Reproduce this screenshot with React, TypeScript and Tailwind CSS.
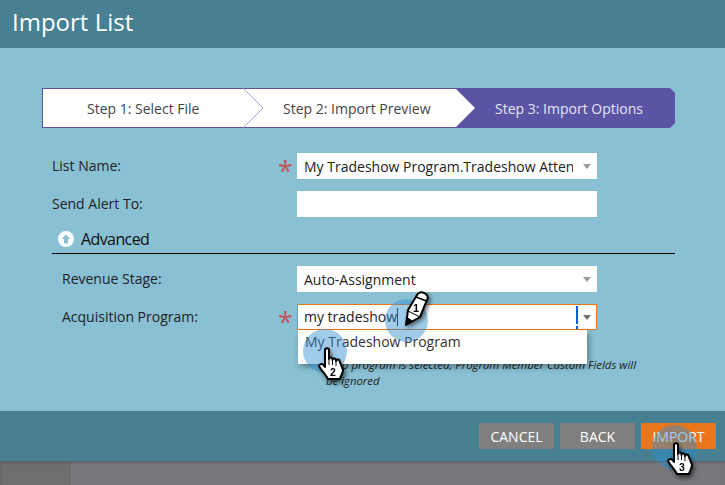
const font = { fontFamily: '"Open Sans", sans-serif' };

function Hand({ n, className }: { n: string; className: string }) {
  return (
    <svg viewBox="0 0 28 34" className={`absolute w-[28px] h-[34px] drop-shadow-[2px_3px_2px_rgba(0,0,0,0.55)] ${className}`}>
      <path
        d="M7 3c0-2.500 4-2.500 4 0v9c0-2 3.500-2 3.500 0v1c0-2 3.500-2 3.500 0v1c0-2 3.500-2 3.500 0l3.500 9c0 3-2 5-3 9H10C8 28 4 24 1.500 20c-1.200-2 1.500-4 3.500-2.500L7 20z"
        fill="#fff"
        stroke="#000"
        strokeWidth="2"
        strokeLinejoin="round"
      />
      <path d="M11 12v6M14.500 13v5M18 14v5" stroke="#000" strokeWidth="1" />
      <text x="15" y="29" textAnchor="middle" fontSize="10.500" fontWeight="600" fontFamily="Liberation Sans, sans-serif" fill="#000">
        {n}
      </text>
    </svg>
  );
}

function Caret({ dark }: { dark?: boolean }) {
  return (
    <span className={`w-0 h-0 border-x-[4px] border-x-transparent border-t-[5px] ${dark ? 'border-t-[#6f6f6f]' : 'border-t-[#9a9a9a]'}`} />
  );
}

function Star() {
  return <span className="block -ml-[5px] text-[27px] leading-[26px] h-[26px] pt-[5px] text-[#c4545c] text-center">*</span>;
}

function Select({ value, clip }: { value: string; clip?: boolean }) {
  return (
    <div className="w-[300px] h-[26px] bg-white flex items-center pl-[7px] pr-[6px] text-[14px] text-[#222]">
      <span className={`whitespace-nowrap overflow-hidden ${clip ? 'w-[269px] shrink-0' : 'flex-1'}`}>{value}</span>
      <span className="ml-auto flex">
        <Caret />
      </span>
    </div>
  );
}

function Row({ label, indent, star, children, className }: { label: string; indent?: boolean; star?: boolean; children: React.ReactNode; className: string }) {
  return (
    <div className={`flex items-center ${className}`}>
      <label className={`text-[14px] text-[#222] w-[227px] pb-[2px] ${indent ? 'pl-[10px]' : ''}`}>{label}</label>
      <div className="w-[18px] flex justify-center">{star && <Star />}</div>
      {children}
    </div>
  );
}

function Button({ label, orange }: { label: string; orange?: boolean }) {
  return (
    <button className={`w-[75px] h-[26px] text-[14px] text-white ${orange ? 'bg-[#e9761a]' : 'bg-[#7f7f7f]'}`}>
      {label}
    </button>
  );
}

export default function App() {
  return (
    <div className="w-[725px] h-[485px] overflow-hidden flex flex-col relative bg-[#78777c]" style={font}>
      {/* header */}
      <div className="h-[48px] bg-[#478092] flex items-center pl-[12px] pb-[5px] shrink-0">
        <h1 className="text-[24px] text-white">Import List</h1>
      </div>

      {/* body */}
      <div className="h-[363px] bg-[#89c0d3] shrink-0 pt-[40px] pl-[42px]">
        {/* stepper */}
        <div className="flex w-[633px] h-[40px] text-[14px]">
          <div className="relative w-[201px] bg-white border-y border-l border-[#5a54a4] pl-[44px] flex items-center text-[#444]">
            Step 1: Select File
            <svg viewBox="0 0 21 40" className="absolute z-10 left-[200px] top-[-1px] w-[21px] h-[40px]">
              <path d="M0 .5h.5L20 20 .5 39.500H0z" fill="#fff" />
              <path d="M.5 .5 20 20 .5 39.500" fill="none" stroke="#a9a4d3" strokeWidth="1" />
            </svg>
          </div>
          <div className="relative w-[213px] bg-white border-y border-[#5a54a4] pl-[40px] flex items-center text-[#444]">
            Step 2: Import Preview
            <svg viewBox="0 0 19 38" className="absolute z-10 left-[213px] top-0 w-[19px] h-[38px]">
              <path d="M0 0 19 19 0 38z" fill="#fff" />
            </svg>
          </div>
          <div className="w-[219px] bg-[#5a54a4] [clip-path:polygon(0_0,214px_0,100%_5px,100%_35px,214px_100%,0_100%)] pl-[39px] flex items-center text-[#e6e6f2]">
            Step 3: Import Options
          </div>
        </div>

        {/* form */}
        <div className="pl-[10px]">
          <Row label="List Name:" star className="mt-[25px]">
            <Select value="My Tradeshow Program.Tradeshow Attendees" clip />
          </Row>
          <Row label="Send Alert To:" className="mt-[12px]">
            <div className="w-[300px] h-[26px] bg-white" />
          </Row>

          <div className="mt-[9px] h-[28px] w-[623px] border-b border-black flex items-center pl-[6px] pb-[1px]">
            <svg viewBox="0 0 16 16" className="w-[16px] h-[16px]">
              <circle cx="8" cy="8" r="8" fill="#fff" />
              <path d="M8 3.500 12.500 8H10v4.500H6V8H3.500z" fill="#89c0d3" />
            </svg>
            <span className="ml-[7px] text-[16px] tracking-[-0.6px] text-[#111]">Advanced</span>
          </div>

          <Row label="Revenue Stage:" indent className="mt-[12px]">
            <Select value="Auto-Assignment" />
          </Row>

          <Row label="Acquisition Program:" indent star className="mt-[12px]">
            <div className="relative w-[300px] h-[26px] bg-white border border-[#e9761a] flex items-center pl-[6px] pr-[5px] text-[14px] text-[#222]">
              <span className="border-r border-[#222] leading-[18px]">my tradeshow</span>
              <span className="ml-auto mr-[5px] w-[2px] h-[23px] bg-[linear-gradient(#0a5fd8_0,#0a5fd8_18px,transparent_18px,transparent_20px,#0a5fd8_20px)]" />
              <Caret dark />
              {/* autocomplete list */}
              <div className="absolute z-10 left-0 top-[25px] w-[289px] h-[34px] bg-white shadow-[2px_3px_6px_rgba(0,0,0,0.35)] pl-[7px] pt-[1px] text-[14px] text-[#333]">
                My Tradeshow Program
              </div>
            </div>
          </Row>

          <p className="ml-[274px] mt-[27px] w-[315px] text-[11.360px] italic leading-[16px] text-[#222]">
            If no program is selected, Program Member Custom Fields will be ignored
          </p>
        </div>
      </div>

      {/* footer */}
      <div className="h-[50px] bg-[#478092] shrink-0 flex items-center justify-end gap-[6px] pr-[9px]">
        <Button label="CANCEL" />
        <Button label="BACK" />
        <Button label="IMPORT" orange />
      </div>

      {/* bottom strip */}
      <div className="flex-1 flex bg-[#78777c] shadow-[inset_0_2px_2px_rgba(0,0,0,0.15)]">
        <div className="w-[71px] bg-[#6e6e6e] shadow-[inset_0_2px_2px_rgba(0,0,0,0.15)]" />
      </div>

      {/* tutorial callouts over the page */}
      <div className="absolute z-20 left-[385px] top-[299px] w-[43px] h-[43px] rounded-full bg-[#2d8fd0]/45" />
      <svg viewBox="0 0 26 38" className="absolute z-20 left-[403px] top-[290px] w-[26px] h-[38px] drop-shadow-[2px_2px_2px_rgba(0,0,0,0.55)]">
        <path d="M14 5Q17 0 23 4 26 7 24 10L17 27 3 35 5 20z" fill="#fff" stroke="#000" strokeWidth="2" strokeLinejoin="round" />
        <path d="M13 7 23.500 11" stroke="#000" strokeWidth="1.500" />
        <path d="M5 21 17 27" stroke="#000" strokeWidth="1" />
        <path d="M3 35 4 27 10 31z" fill="#000" />
        <text x="13" y="22" textAnchor="middle" fontSize="11" fontWeight="600" fontFamily="Liberation Sans, sans-serif" fill="#000">1</text>
      </svg>

      <div className="absolute z-20 left-[303px] top-[329px] w-[44px] h-[44px] rounded-full bg-[#2d8fd0]/45" />
      <Hand n="2" className="left-[318px] top-[347px] z-20" />

      <div className="absolute z-20 left-[652px] top-[425px] w-[45px] h-[45px] rounded-full bg-[#2d8fd0]/45" />
      <Hand n="3" className="left-[667px] top-[442px] z-20" />
    </div>
  );
}
